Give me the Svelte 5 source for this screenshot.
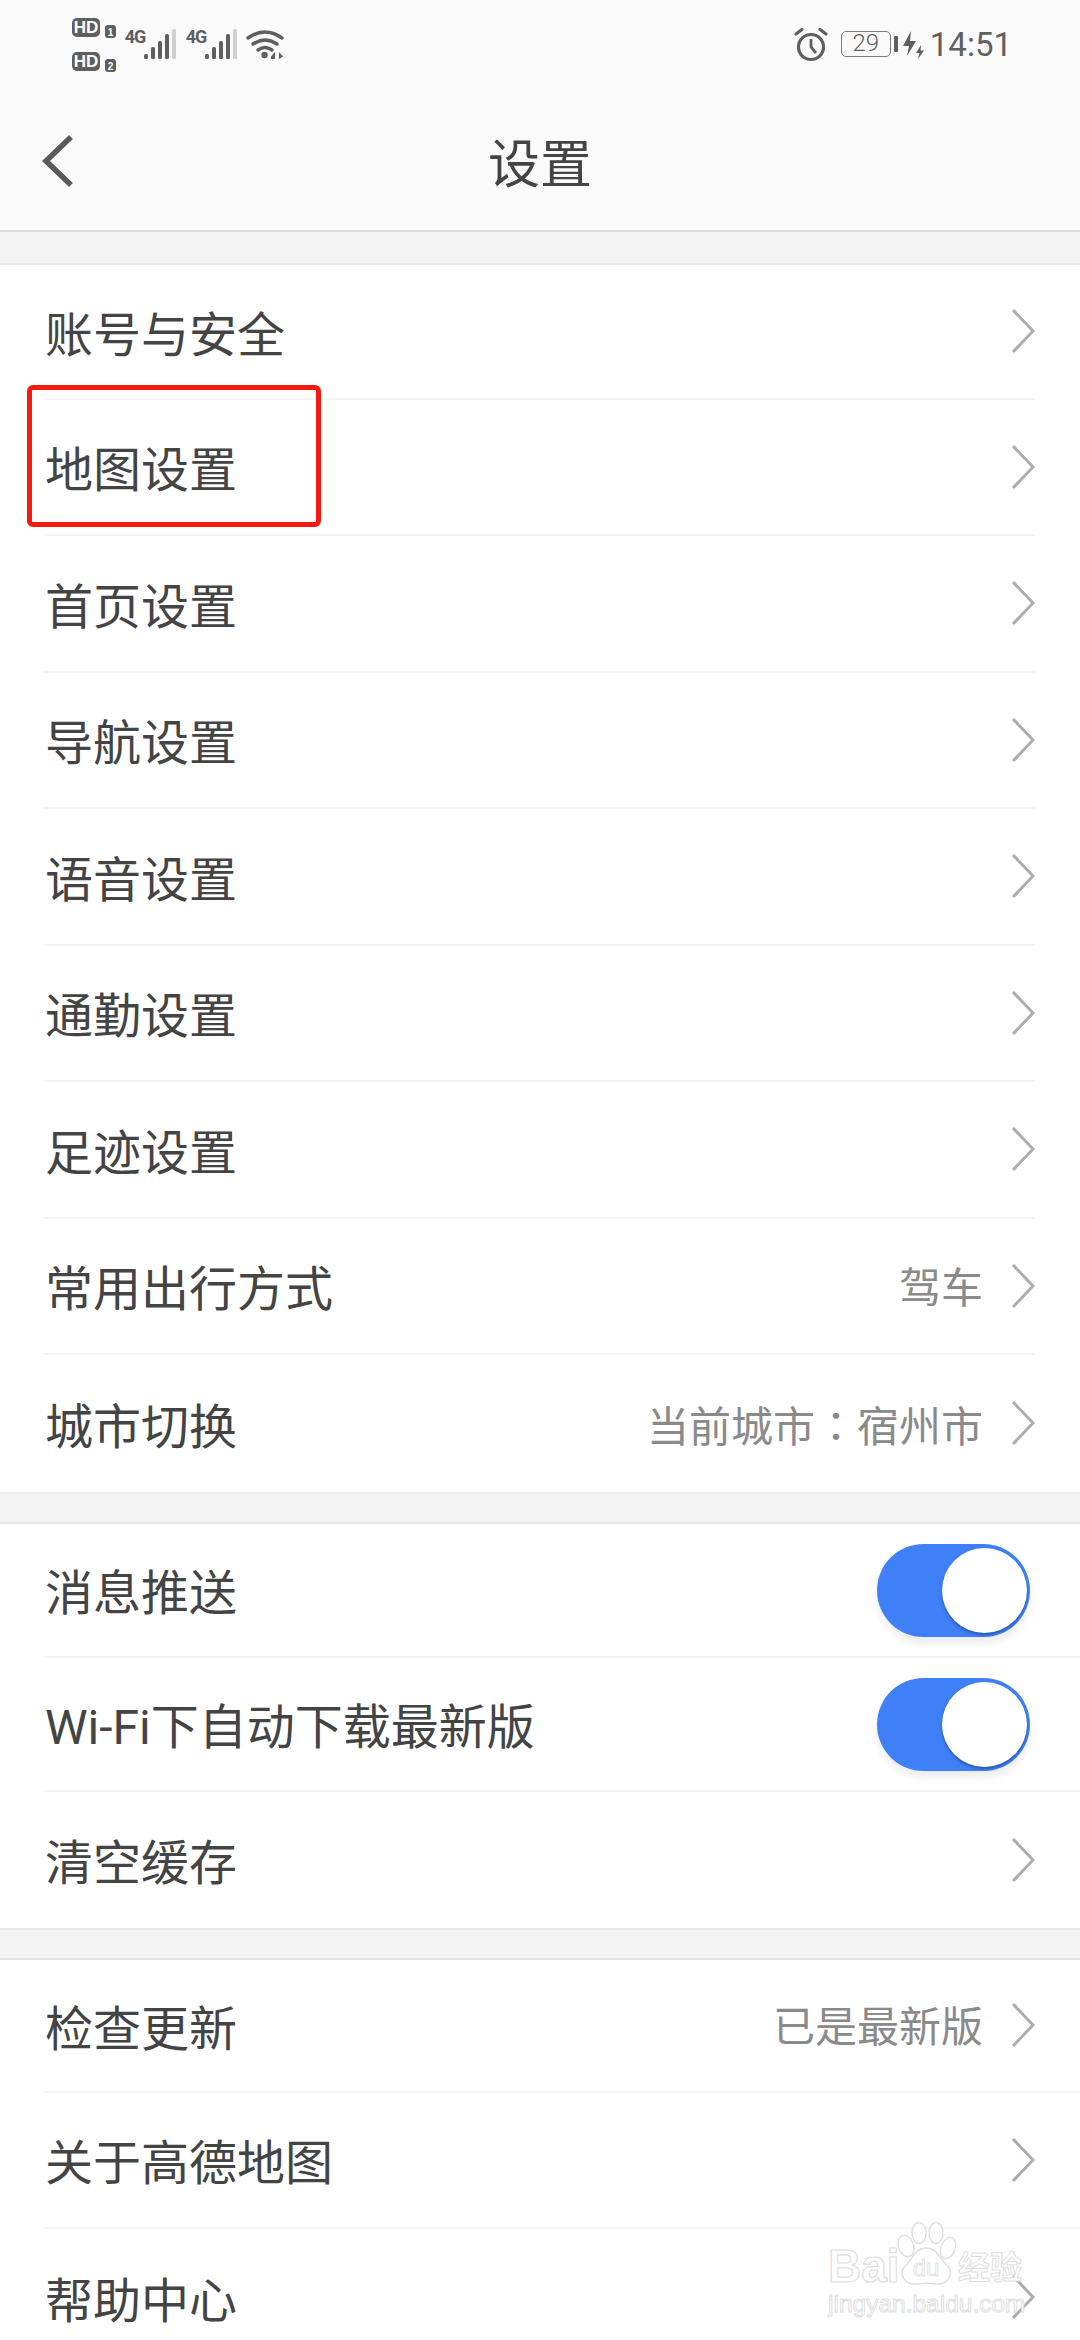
<script>
  const accountRows = [
    { label: '账号与安全' },
    { label: '地图设置' },
    { label: '首页设置' },
    { label: '导航设置' },
    { label: '语音设置' },
    { label: '通勤设置' },
    { label: '足迹设置' },
    { label: '常用出行方式', value: ['驾车'] },
    { label: '城市切换', value: ['当前城市', '宿州市'] }
  ];

  const prefRows = [
    { label: '消息推送', toggle: true },
    { label: 'Wi-Fi下自动下载最新版', toggle: true },
    { label: '清空缓存' }
  ];

  const aboutRows = [
    { label: '检查更新', value: ['已是最新版'] },
    { label: '关于高德地图' },
    { label: '帮助中心' }
  ];

  const sections = [
    { name: 'account', rows: accountRows },
    { name: 'pref', rows: prefRows },
    { name: 'about', rows: aboutRows }
  ];

  const barX = [144, 151, 158, 165, 172];
  const barTop = [54, 47, 41, 34, 29];
</script>

<div class="page">
  <header class="header">
    <div class="status">
      <svg class="status-left" width="300" height="90" viewBox="0 0 300 90">
        <rect x="72" y="18" width="28" height="19" rx="5" fill="#5f5f5f" />
        <text x="86" y="33" class="hd">HD</text>
        <rect x="105" y="25" width="11" height="13" rx="3" fill="#5f5f5f" />
        <text x="110.5" y="36" class="hd-n">1</text>
        <rect x="72" y="52" width="28" height="19" rx="5" fill="#5f5f5f" />
        <text x="86" y="67" class="hd">HD</text>
        <rect x="105" y="59" width="11" height="13" rx="3" fill="#5f5f5f" />
        <text x="110.5" y="70" class="hd-n">2</text>

        {#each [0, 61] as dx}
          <text x={135 + dx} y="43" class="net">4G</text>
          {#each barX as x, i}
            <rect
              x={x + dx}
              y={barTop[i]}
              width="4"
              height={59 - barTop[i]}
              rx="1.5"
              fill={i === 4 ? '#cfcfcf' : '#5f5f5f'}
            />
          {/each}
        {/each}

        <g fill="none" stroke="#5f5f5f" stroke-width="3.4" stroke-linecap="round">
          <path d="M248 38 Q265 26 282 38" />
          <path d="M253 44 Q265 36 277 44" />
          <path d="M258 50 Q265 45 272 50" />
        </g>
        <circle cx="264.5" cy="55" r="3.2" fill="#5f5f5f" />
        <path d="M271 56.5 L275 52 V59 H271 Z M279 52 L283 56.5 L279 59 Z" fill="#5f5f5f" />
      </svg>

      <div class="status-right">
        <svg width="36" height="36" viewBox="0 0 36 36">
          <circle cx="18" cy="20" r="12.5" fill="none" stroke="#5f5f5f" stroke-width="3.2" />
          <path d="M18 12 V20 L23 26" fill="none" stroke="#5f5f5f" stroke-width="2.8" />
          <path d="M3 7 L9 2.5 M33 7 L27 2.5" stroke="#5f5f5f" stroke-width="3.2" stroke-linecap="round" />
        </svg>
        <span class="battery">29</span>
        <span class="battery-nub"></span>
        <svg class="bolts" width="26" height="28" viewBox="0 0 26 28">
          <path d="M10 0 L2 15 H8 L6 25 L15 10 H9 Z" fill="#5f5f5f" />
          <path d="M20 14 L15 22 H18.5 L17 28 L23 19.5 H19.5 Z" fill="#5f5f5f" />
        </svg>
        <span class="time">14:51</span>
      </div>
    </div>

    <div class="nav">
      <svg class="back" width="34" height="56" viewBox="0 0 34 56">
        <path d="M30 4 L5 28 L30 52" fill="none" stroke="#5a5a5a" stroke-width="5.5" />
      </svg>
      <h1 class="title">设置</h1>
    </div>
  </header>

  {#each sections as section}
    <div class="band"></div>
    <section class="list {section.name}">
      {#each section.rows as row}
        <div class="row">
          <span class="label">{row.label}</span>
          {#if row.toggle}
            <span class="toggle"><span class="knob"></span></span>
          {:else}
            {#if row.value}
              <span class="value">
                {#each row.value as part, i}{#if i > 0}<span class="colon">：</span>{/if}{part}{/each}
              </span>
            {/if}
            <svg class="chevron" width="24" height="46" viewBox="0 0 24 46">
              <path d="M2 2 L22 23 L2 44" fill="none" stroke="#adadad" stroke-width="3" />
            </svg>
          {/if}
        </div>
      {/each}
    </section>
  {/each}

  <div class="highlight"></div>

  <div class="watermark">
    <div class="wm-top">
      <span class="wm-bai">Bai</span>
      <svg class="paw" width="60" height="66" viewBox="0 0 60 66">
        <g fill="#fff" stroke="#dedede" stroke-width="1.4">
          <ellipse cx="10" cy="24" rx="7.5" ry="11" transform="rotate(-20 10 24)" />
          <ellipse cx="23" cy="11" rx="7" ry="10.5" />
          <ellipse cx="40" cy="11" rx="7" ry="10.5" />
          <ellipse cx="52" cy="26" rx="7" ry="11" transform="rotate(20 52 26)" />
          <path d="M30 26 C42 26 44 38 52 44 C58 52 52 63 40 62 C34 61 27 61 21 62 C8 63 2 52 9 44 C17 38 18 26 30 26 Z" />
        </g>
        <text x="30" y="54" class="wm-du">du</text>
      </svg>
      <span class="wm-cn">经验</span>
    </div>
    <div class="wm-url">jingyan.baidu.com</div>
  </div>
</div>

<style>
  :global(body) {
    margin: 0;
    background: #fff;
  }

  .page {
    position: relative;
    width: 1080px;
    height: 2340px;
    overflow: hidden;
    background: #fff;
    font-family: "Roboto", "Noto Sans CJK SC", sans-serif;
    color: #444;
  }

  .header {
    height: 232px;
    box-sizing: border-box;
    background: #fafafa;
    border-bottom: 2px solid #dcdcdc;
  }

  .status {
    height: 90px;
    display: flex;
    justify-content: space-between;
  }

  .status-right {
    display: flex;
    align-items: flex-start;
    padding: 25px 68px 0 0;
    color: #5f5f5f;
  }

  .status-right > svg:first-child {
    margin-top: 2px;
  }

  .hd {
    font: 700 17px "Liberation Sans", sans-serif;
    fill: #fff;
    text-anchor: middle;
  }

  .hd-n {
    font: 700 10px "Liberation Sans", sans-serif;
    fill: #fff;
    text-anchor: middle;
  }

  .net {
    font: 700 18px "Roboto", sans-serif;
    fill: #5f5f5f;
    text-anchor: middle;
    letter-spacing: -1px;
  }

  .battery {
    width: 50px;
    height: 26px;
    margin: 6px 0 0 12px;
    box-sizing: border-box;
    border: 1.5px solid #7d7d7d;
    border-radius: 5px;
    font: 300 24px/23px "Roboto", sans-serif;
    text-align: center;
  }

  .battery-nub {
    width: 4px;
    height: 16px;
    margin: 11px 0 0 3px;
    background: #5f5f5f;
    border-radius: 1px;
  }

  .bolts {
    margin: 6px 0 0 3px;
  }

  .time {
    margin-left: 3px;
    font: 400 33px/40px "Roboto", sans-serif;
  }

  .nav {
    position: relative;
    height: 140px;
    display: flex;
    align-items: center;
    justify-content: center;
  }

  .back {
    position: absolute;
    left: 41px;
    top: 43px;
  }

  .title {
    margin: 0;
    padding-top: 11px;
    font-size: 52px;
    font-weight: 400;
    color: #444;
    line-height: 1;
  }

  .band {
    height: 33px;
    box-sizing: border-box;
    background: #f3f3f3;
    border-bottom: 2px solid #e6e6e6;
  }

  .list ~ .band {
    height: 32px;
    border-top: 2px solid #e9e9e9;
  }

  .row {
    height: 136.5px;
    box-sizing: border-box;
    margin-left: 44px;
    padding-right: 45px;
    display: flex;
    align-items: center;
    border-bottom: 2px solid #f4f4f4;
  }

  .row:last-child {
    border-bottom: none;
  }

  .account .row {
    margin-right: 45px;
    padding-right: 0;
  }

  .account .row:first-child {
    height: 134.5px;
  }

  .pref .row {
    height: 134px;
  }

  .pref .row:last-child {
    height: 136px;
  }

  .about .row:first-child {
    height: 133px;
  }

  .label {
    flex: 1;
    margin-left: 1px;
    padding-top: 9px;
    font-size: 48px;
    line-height: 1;
  }

  .value {
    margin-right: 28px;
    padding-top: 6px;
    font-size: 42px;
    line-height: 1;
    color: #8a8a8a;
  }

  .colon {
    font-family: "Noto Sans CJK TC", sans-serif;
  }

  .toggle {
    width: 153px;
    height: 93px;
    margin: 2px 5px 0 0;
    padding-right: 3px;
    box-sizing: border-box;
    display: flex;
    align-items: center;
    justify-content: flex-end;
    border-radius: 47px;
    background: #3f80f8;
    box-shadow: 0 6px 8px rgba(0, 0, 0, 0.08);
  }

  .knob {
    width: 85px;
    height: 85px;
    border-radius: 50%;
    background: #fff;
    box-shadow: 0 2px 3px rgba(20, 50, 120, 0.55);
  }

  .highlight {
    position: absolute;
    left: 27px;
    top: 385px;
    width: 294px;
    height: 142px;
    box-sizing: border-box;
    border: 5px solid #f5190f;
    border-radius: 6px;
  }

  .watermark {
    position: absolute;
    left: 828px;
    top: 2222px;
    width: 200px;
    pointer-events: none;
  }

  .wm-top {
    display: flex;
    align-items: flex-end;
    height: 66px;
  }

  .wm-bai {
    width: 68px;
    font: 700 46px/44px "Liberation Sans", sans-serif;
    color: #fff;
    -webkit-text-stroke: 1.2px #dedede;
  }

  .paw {
    flex-shrink: 0;
  }

  .wm-du {
    font: 400 24px "Liberation Sans", sans-serif;
    fill: #fff;
    stroke: #dedede;
    stroke-width: 0.8px;
    text-anchor: middle;
  }

  .wm-cn {
    margin-left: 2px;
    font-size: 32px;
    line-height: 40px;
    font-weight: 700;
    color: #fff;
    -webkit-text-stroke: 1px #dedede;
  }

  .wm-url {
    margin-top: 1px;
    font: 400 24.5px/30px "Liberation Sans", sans-serif;
    color: #fff;
    -webkit-text-stroke: 1px #dedede;
    white-space: nowrap;
  }
</style>
